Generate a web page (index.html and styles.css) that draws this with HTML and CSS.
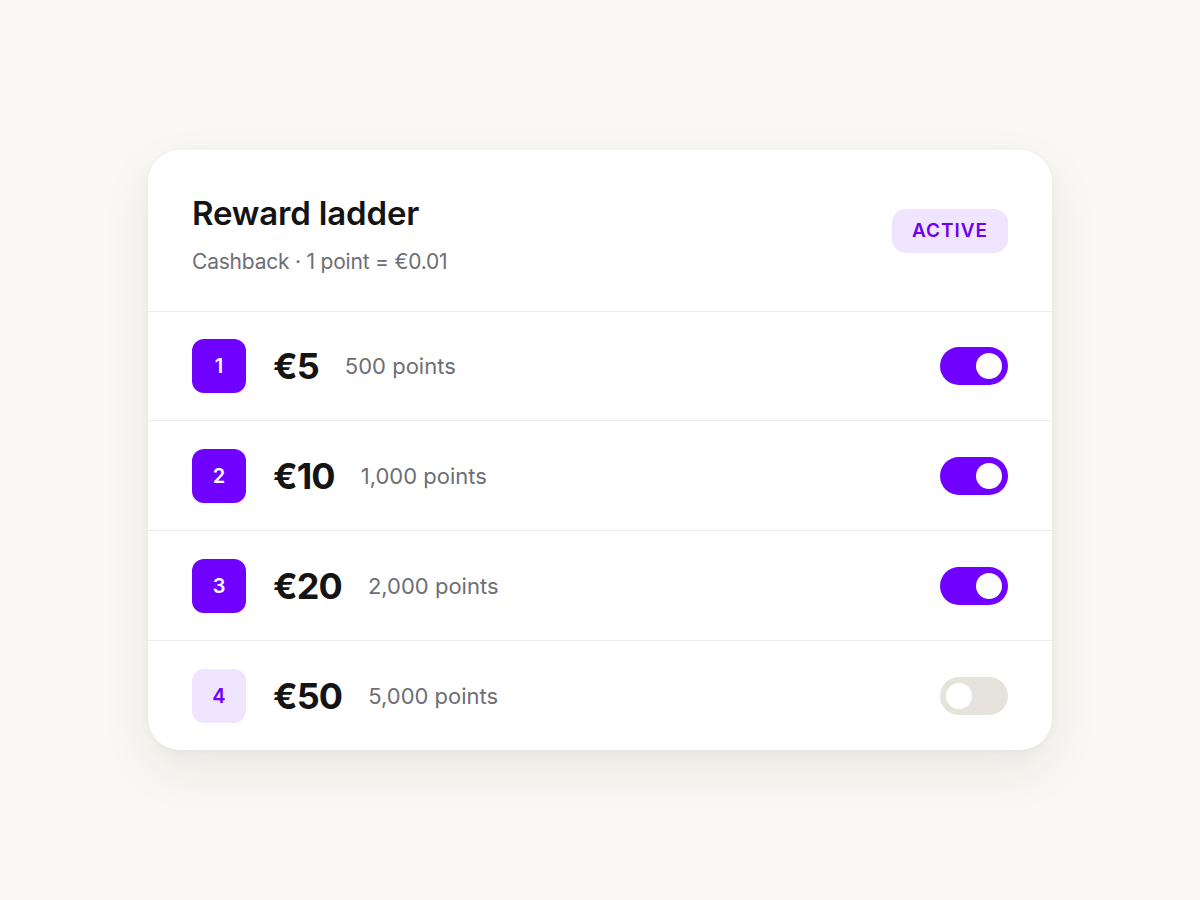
FILE: index.html
```html
<!DOCTYPE html>
<html lang="en">

<head>
    <meta charset="UTF-8">
    <meta name="viewport" content="width=device-width, initial-scale=1.0">
    <link rel="stylesheet" href="styles.css">
    <title>Reward ladder</title>
</head>

<body>
    <div class="card">
        <header class="card-head">
            <div>
                <h1>Reward ladder</h1>
                <p class="sub">Cashback · 1 point = €0.01</p>
            </div>
            <span class="status">ACTIVE</span>
        </header>

        <ul class="tiers">
            <li class="tier">
                <span class="step">1</span>
                <span class="amount">€5</span>
                <span class="points">500 points</span>
                <span class="switch on"><span class="knob"></span></span>
            </li>
            <li class="tier">
                <span class="step">2</span>
                <span class="amount">€10</span>
                <span class="points">1,000 points</span>
                <span class="switch on"><span class="knob"></span></span>
            </li>
            <li class="tier">
                <span class="step">3</span>
                <span class="amount">€20</span>
                <span class="points">2,000 points</span>
                <span class="switch on"><span class="knob"></span></span>
            </li>
            <li class="tier">
                <span class="step off">4</span>
                <span class="amount">€50</span>
                <span class="points">5,000 points</span>
                <span class="switch"><span class="knob"></span></span>
            </li>
        </ul>
    </div>
</body>

</html>
```

FILE: styles.css
```css
body {
    font-family: 'Inter', 'Liberation Sans', sans-serif;
    margin: 0;
    padding: 150px 148px;
    background: #f9f8f4;
    color: #141414;
}

.card {
    background: #fff;
    border-radius: 32px;
    box-shadow: 0 20px 50px rgba(40, 35, 20, 0.08), 0 2px 8px rgba(40, 35, 20, 0.04);
    overflow: hidden;
}

.card-head {
    display: flex;
    align-items: center;
    justify-content: space-between;
    height: 162px;
    padding: 8px 44px 0;
    border-bottom: 1px solid #ecebe6;
    box-sizing: border-box;
}

h1 {
    margin: 0;
    font-size: 33px;
    font-weight: 600;
    letter-spacing: -0.005em;
    line-height: 1.1;
}

.sub {
    margin: 17px 0 0;
    font-size: 21px;
    color: #6e6e74;
    letter-spacing: -0.01em;
}

.status {
    background: #f0e5ff;
    color: #6f00e8;
    font-size: 19px;
    font-weight: 600;
    letter-spacing: 0.05em;
    padding: 0 20px;
    height: 44px;
    line-height: 44px;
    border-radius: 14px;
    margin-top: -8px;
}

.tiers {
    list-style: none;
    margin: 0;
    padding: 0;
}

.tier {
    display: flex;
    align-items: center;
    height: 109px;
    padding: 0 44px;
    border-top: 1px solid #ecebe6;
}

.tier:first-child {
    border-top: none;
    height: 108px;
}

.step {
    width: 54px;
    height: 54px;
    border-radius: 12px;
    background: #7000ff;
    color: #fff;
    font-size: 20px;
    font-weight: 600;
    display: flex;
    align-items: center;
    justify-content: center;
}

.step.off {
    background: #f0e5ff;
    color: #7000ff;
}

.amount {
    margin-left: 27px;
    font-size: 36px;
    font-weight: 700;
    letter-spacing: -0.025em;
}

.points {
    margin-left: 26px;
    font-size: 22px;
    color: #6e6e74;
}

.switch {
    margin-left: auto;
    width: 68px;
    height: 38px;
    border-radius: 19px;
    background: #e6e3dc;
    display: flex;
    align-items: center;
    padding: 0 6px;
    box-sizing: border-box;
}

.switch.on {
    background: #7000ff;
    justify-content: flex-end;
}

.knob {
    width: 26px;
    height: 26px;
    border-radius: 50%;
    background: #fff;
}
```
